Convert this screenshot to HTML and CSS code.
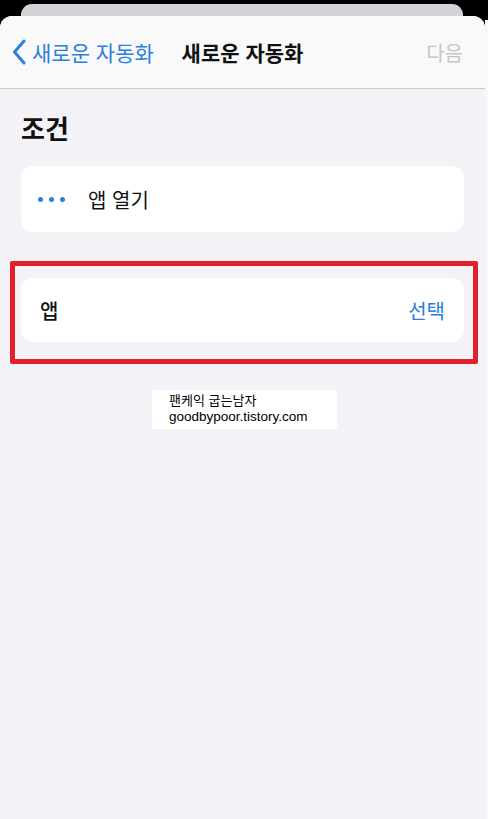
FILE: index.html
```html
<!DOCTYPE html>
<html lang="ko">
<head>
<meta charset="utf-8">
<link rel="stylesheet" href="styles.css">
</head>
<body>
<div class="screen">
  <div class="backsheet"></div>
  <div class="sheet">
    <header class="nav">
      <div class="nav-left">
        <svg class="chev" width="14" height="26" viewBox="0 0 14 26"><path d="M12 2 L2.5 13 L12 24" fill="none" stroke="#2a80da" stroke-width="3" stroke-linecap="round" stroke-linejoin="round"/></svg>
        <span class="back-text">새로운 자동화</span>
      </div>
      <div class="nav-title">새로운 자동화</div>
      <div class="nav-right">다음</div>
    </header>
    <main class="content">
      <h1 class="section-title">조건</h1>
      <div class="card">
        <span class="dots"><i></i><i></i><i></i></span>
        <span class="card-text">앱 열기</span>
      </div>
      <div class="highlight">
        <div class="card card-row">
          <span class="row-label">앱</span>
          <span class="row-action">선택</span>
        </div>
      </div>
      <div class="watermark">
        <div class="wm-ko">팬케익 굽는남자</div>
        <div class="wm-en">goodbypoor.tistory.com</div>
      </div>
    </main>
  </div>
</div>
</body>
</html>
```
FILE: styles.css
```css
html, body {
  margin: 0;
  padding: 0;
}
body {
  width: 488px;
  height: 819px;
  overflow: hidden;
  font-family: "Noto Sans CJK KR", "Noto Sans", sans-serif;
  background: linear-gradient(#000 0 20px, #f8f8fa 20px);
}
.screen {
  width: 485px;
  height: 819px;
  display: flex;
  flex-direction: column;
  background: #000;
}
.backsheet {
  margin: 4px 22px 0 21px;
  height: 24px;
  margin-bottom: -12px;
  background: #d3d3d8;
  border-radius: 11px 11px 0 0;
  flex: none;
}
.sheet {
  flex: 1;
  background: #f2f2f7;
  border-radius: 12px 12px 0 0;
  overflow: hidden;
  display: flex;
  flex-direction: column;
}
.nav {
  height: 72px;
  background: #f9f9f9;
  border-bottom: 1px solid #c9c9cd;
  display: grid;
  grid-template-columns: 1fr auto 1fr;
  align-items: center;
  flex: none;
}
.nav-left {
  display: flex;
  align-items: center;
  padding-left: 12px;
  gap: 6px;
  color: #2a80da;
  font-size: 21px;
}
.chev { display: block; }
.back-text { line-height: 28px; }
.nav-title {
  font-size: 21px;
  font-weight: 700;
  color: #111;
  line-height: 28px;
}
.nav-right {
  justify-self: end;
  padding-right: 22px;
  font-size: 20px;
  color: #c6c6ca;
}
.content {
  padding: 0 21px;
  display: flex;
  flex-direction: column;
}
.section-title {
  margin: 23px 0 0 0;
  font-size: 26px;
  line-height: 32px;
  font-weight: 700;
  color: #111;
}
.card {
  margin-top: 22px;
  height: 66px;
  background: #fff;
  border-radius: 12px;
  display: flex;
  align-items: center;
}
.dots {
  display: flex;
  gap: 6px;
  margin-left: 17px;
  width: 27px;
}
.dots i {
  width: 5px;
  height: 5px;
  border-radius: 50%;
  background: #2a80da;
}
.card-text {
  margin-left: 23px;
  font-size: 20px;
  color: #111;
}
.highlight {
  margin: 29px -14px 0 -11px;
  border: 5px solid #e21f2d;
  border-radius: 2px;
  padding: 12px 9px 17px 6px;
}
.card-row {
  margin-top: 0;
  height: 64px;
  justify-content: space-between;
  padding: 0 19px 0 19px;
}
.row-label {
  font-size: 20px;
  font-weight: 500;
  color: #111;
}
.row-action {
  font-size: 20px;
  color: #2a80da;
}
.watermark {
  align-self: flex-start;
  margin: 26px 0 0 131px;
  width: 185px;
  height: 39px;
  box-sizing: border-box;
  background: #fff;
  padding: 0 0 0 17px;
  color: #000;
}
.wm-ko {
  font-family: "Noto Sans CJK KR", sans-serif;
  font-size: 13px;
  line-height: 19px;
}
.wm-en {
  font-family: "Liberation Sans", sans-serif;
  font-size: 13.5px;
  line-height: 15px;
}
```
